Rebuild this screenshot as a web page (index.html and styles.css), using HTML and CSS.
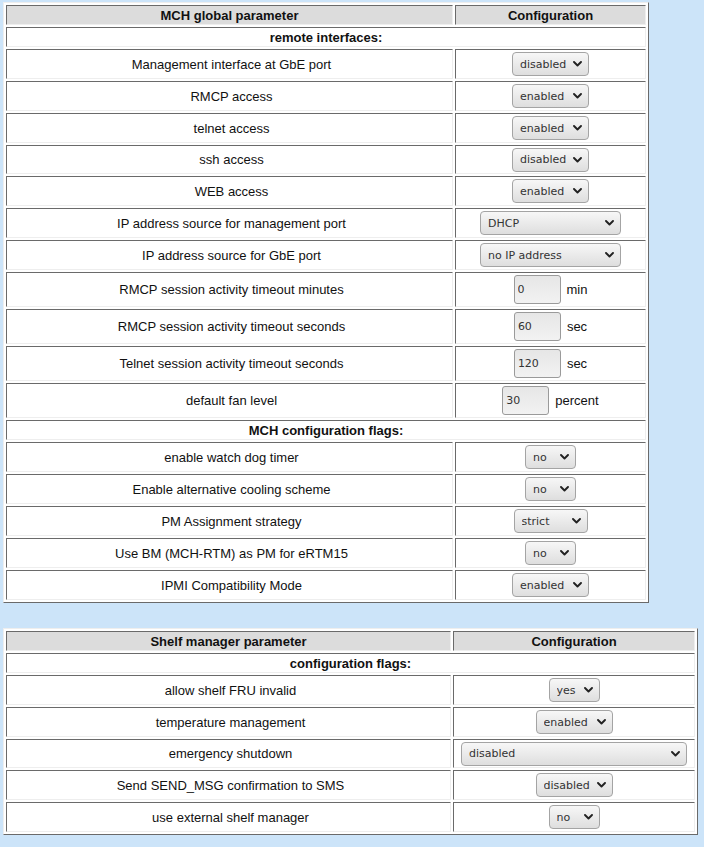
FILE: index.html
```html
<!DOCTYPE html>
<html>
<head>
<meta charset="utf-8">
<title>MCH configuration</title>
<link rel="stylesheet" href="styles.css">
</head>
<body>
<table class="grid t1">
  <colgroup><col class="c1a"><col class="c1b"></colgroup>
  <tr class="hdr"><th>MCH global parameter</th><th>Configuration</th></tr>
  <tr class="sec"><td colspan="2">remote interfaces:</td></tr>
  <tr class="r"><td>Management interface at GbE port</td><td><span class="sel w77"><select><option>disabled</option><option>enabled</option></select><svg class="chev" viewBox="0 0 9 6"><polyline points="1,1 4.5,4.5 8,1"/></svg></span></td></tr>
  <tr class="r"><td>RMCP access</td><td><span class="sel w77"><select><option>enabled</option><option>disabled</option></select><svg class="chev" viewBox="0 0 9 6"><polyline points="1,1 4.5,4.5 8,1"/></svg></span></td></tr>
  <tr class="r"><td>telnet access</td><td><span class="sel w77"><select><option>enabled</option><option>disabled</option></select><svg class="chev" viewBox="0 0 9 6"><polyline points="1,1 4.5,4.5 8,1"/></svg></span></td></tr>
  <tr class="r r29"><td>ssh access</td><td><span class="sel w77"><select><option>disabled</option><option>enabled</option></select><svg class="chev" viewBox="0 0 9 6"><polyline points="1,1 4.5,4.5 8,1"/></svg></span></td></tr>
  <tr class="r"><td>WEB access</td><td><span class="sel w77"><select><option>enabled</option><option>disabled</option></select><svg class="chev" viewBox="0 0 9 6"><polyline points="1,1 4.5,4.5 8,1"/></svg></span></td></tr>
  <tr class="r"><td>IP address source for management port</td><td><span class="sel w141"><select><option>DHCP</option><option>no IP address</option></select><svg class="chev" viewBox="0 0 9 6"><polyline points="1,1 4.5,4.5 8,1"/></svg></span></td></tr>
  <tr class="r"><td>IP address source for GbE port</td><td><span class="sel w141"><select><option>no IP address</option><option>DHCP</option></select><svg class="chev" viewBox="0 0 9 6"><polyline points="1,1 4.5,4.5 8,1"/></svg></span></td></tr>
  <tr class="ri"><td>RMCP session activity timeout minutes</td><td><input class="num" type="text" value="0"><span class="unit">min</span></td></tr>
  <tr class="ri"><td>RMCP session activity timeout seconds</td><td><input class="num" type="text" value="60"><span class="unit">sec</span></td></tr>
  <tr class="ri"><td>Telnet session activity timeout seconds</td><td><input class="num" type="text" value="120"><span class="unit">sec</span></td></tr>
  <tr class="ri"><td>default fan level</td><td><input class="num" type="text" value="30"><span class="unit">percent</span></td></tr>
  <tr class="sec"><td colspan="2">MCH configuration flags:</td></tr>
  <tr class="r"><td>enable watch dog timer</td><td><span class="sel w51"><select><option>no</option><option>yes</option></select><svg class="chev" viewBox="0 0 9 6"><polyline points="1,1 4.5,4.5 8,1"/></svg></span></td></tr>
  <tr class="r"><td>Enable alternative cooling scheme</td><td><span class="sel w51"><select><option>no</option><option>yes</option></select><svg class="chev" viewBox="0 0 9 6"><polyline points="1,1 4.5,4.5 8,1"/></svg></span></td></tr>
  <tr class="r"><td>PM Assignment strategy</td><td><span class="sel w76"><select><option>strict</option></select><svg class="chev" viewBox="0 0 9 6"><polyline points="1,1 4.5,4.5 8,1"/></svg></span></td></tr>
  <tr class="r"><td>Use BM (MCH-RTM) as PM for eRTM15</td><td><span class="sel w51"><select><option>no</option><option>yes</option></select><svg class="chev" viewBox="0 0 9 6"><polyline points="1,1 4.5,4.5 8,1"/></svg></span></td></tr>
  <tr class="r"><td>IPMI Compatibility Mode</td><td><span class="sel w77"><select><option>enabled</option><option>disabled</option></select><svg class="chev" viewBox="0 0 9 6"><polyline points="1,1 4.5,4.5 8,1"/></svg></span></td></tr>
</table>

<table class="grid t2">
  <colgroup><col class="c2a"><col class="c2b"></colgroup>
  <tr class="hdr"><th>Shelf manager parameter</th><th>Configuration</th></tr>
  <tr class="sec"><td colspan="2">configuration flags:</td></tr>
  <tr class="r"><td>allow shelf FRU invalid</td><td><span class="sel w51"><select><option>yes</option><option>no</option></select><svg class="chev" viewBox="0 0 9 6"><polyline points="1,1 4.5,4.5 8,1"/></svg></span></td></tr>
  <tr class="r"><td>temperature management</td><td><span class="sel w77"><select><option>enabled</option><option>disabled</option></select><svg class="chev" viewBox="0 0 9 6"><polyline points="1,1 4.5,4.5 8,1"/></svg></span></td></tr>
  <tr class="r r29"><td>emergency shutdown</td><td><span class="sel w226"><select><option>disabled</option></select><svg class="chev" viewBox="0 0 9 6"><polyline points="1,1 4.5,4.5 8,1"/></svg></span></td></tr>
  <tr class="r"><td>Send SEND_MSG confirmation to SMS</td><td><span class="sel w77"><select><option>disabled</option><option>enabled</option></select><svg class="chev" viewBox="0 0 9 6"><polyline points="1,1 4.5,4.5 8,1"/></svg></span></td></tr>
  <tr class="r"><td>use external shelf manager</td><td><span class="sel w51"><select><option>no</option><option>yes</option></select><svg class="chev" viewBox="0 0 9 6"><polyline points="1,1 4.5,4.5 8,1"/></svg></span></td></tr>
</table>
</body>
</html>
```

FILE: styles.css
```css
html, body {
  margin: 0;
  padding: 0;
  background: #cce4f9;
}
body {
  padding: 2px 0 0 3px;
  font-family: "Liberation Sans", Arial, sans-serif;
  font-size: 13px;
  color: #111;
}
.grid {
  table-layout: fixed;
  border-collapse: separate;
  border-spacing: 2px;
  background: #fff;
  border: 1px solid;
  border-color: #eeeeee #6a6a6a #6a6a6a #eeeeee;
}
.t1 { width: 646px; }
.t2 { width: 695px; margin-top: 25px; }
.c1a { width: 447px; }
.c1b { width: 191px; }
.c2a { width: 445px; }
.c2b { width: 242px; }
.grid th, .grid td {
  box-sizing: border-box;
  padding: 0 1px;
  border: 1px solid;
  border-color: #6a6a6a #eeeeee #eeeeee #6a6a6a;
  text-align: center;
  vertical-align: middle;
  white-space: nowrap;
}
.grid tr.r > td:first-child,
.grid tr.ri > td:first-child {
  padding-left: 5px;
}
.grid th {
  background: #dcdcdc;
  font-weight: bold;
}
.hdr { height: 20px; }
.sec { height: 20px; }
.sec td { font-weight: bold; }
.r { height: 30px; }
.r29 { height: 29px; }
.ri { height: 35px; }
.sel {
  position: relative;
  display: inline-block;
  vertical-align: middle;
  height: 24px;
}
.sel select {
  -webkit-appearance: none;
  appearance: none;
  box-sizing: border-box;
  width: 100%;
  height: 24px;
  margin: 0;
  padding: 0 16px 0 7px;
  border: 1px solid #a4a4a4;
  border-radius: 4px;
  background: linear-gradient(#f7f7f7, #dedede);
  font-family: "DejaVu Sans", sans-serif;
  font-size: 11px;
  color: #333;
  outline: none;
}
.sel .chev {
  position: absolute;
  right: 7px;
  top: 9px;
  width: 9px;
  height: 6px;
  pointer-events: none;
  fill: none;
  stroke: #222;
  stroke-width: 1.9;
  stroke-linecap: round;
  stroke-linejoin: round;
}
.w51 { width: 51px; }
.w76 { width: 74px; }
.w77 { width: 77px; }
.w141 { width: 141px; }
.w226 { width: 226px; }
.num {
  box-sizing: border-box;
  width: 47px;
  height: 29px;
  margin: 0;
  padding: 0 3px;
  vertical-align: middle;
  border: 1px solid #9a9a9a;
  border-radius: 3px;
  background: linear-gradient(#e6e6e6, #f2f2f2);
  font-family: "DejaVu Sans", sans-serif;
  font-size: 11px;
  color: #333;
  outline: none;
}
.unit {
  margin-left: 6px;
  vertical-align: middle;
}
```
